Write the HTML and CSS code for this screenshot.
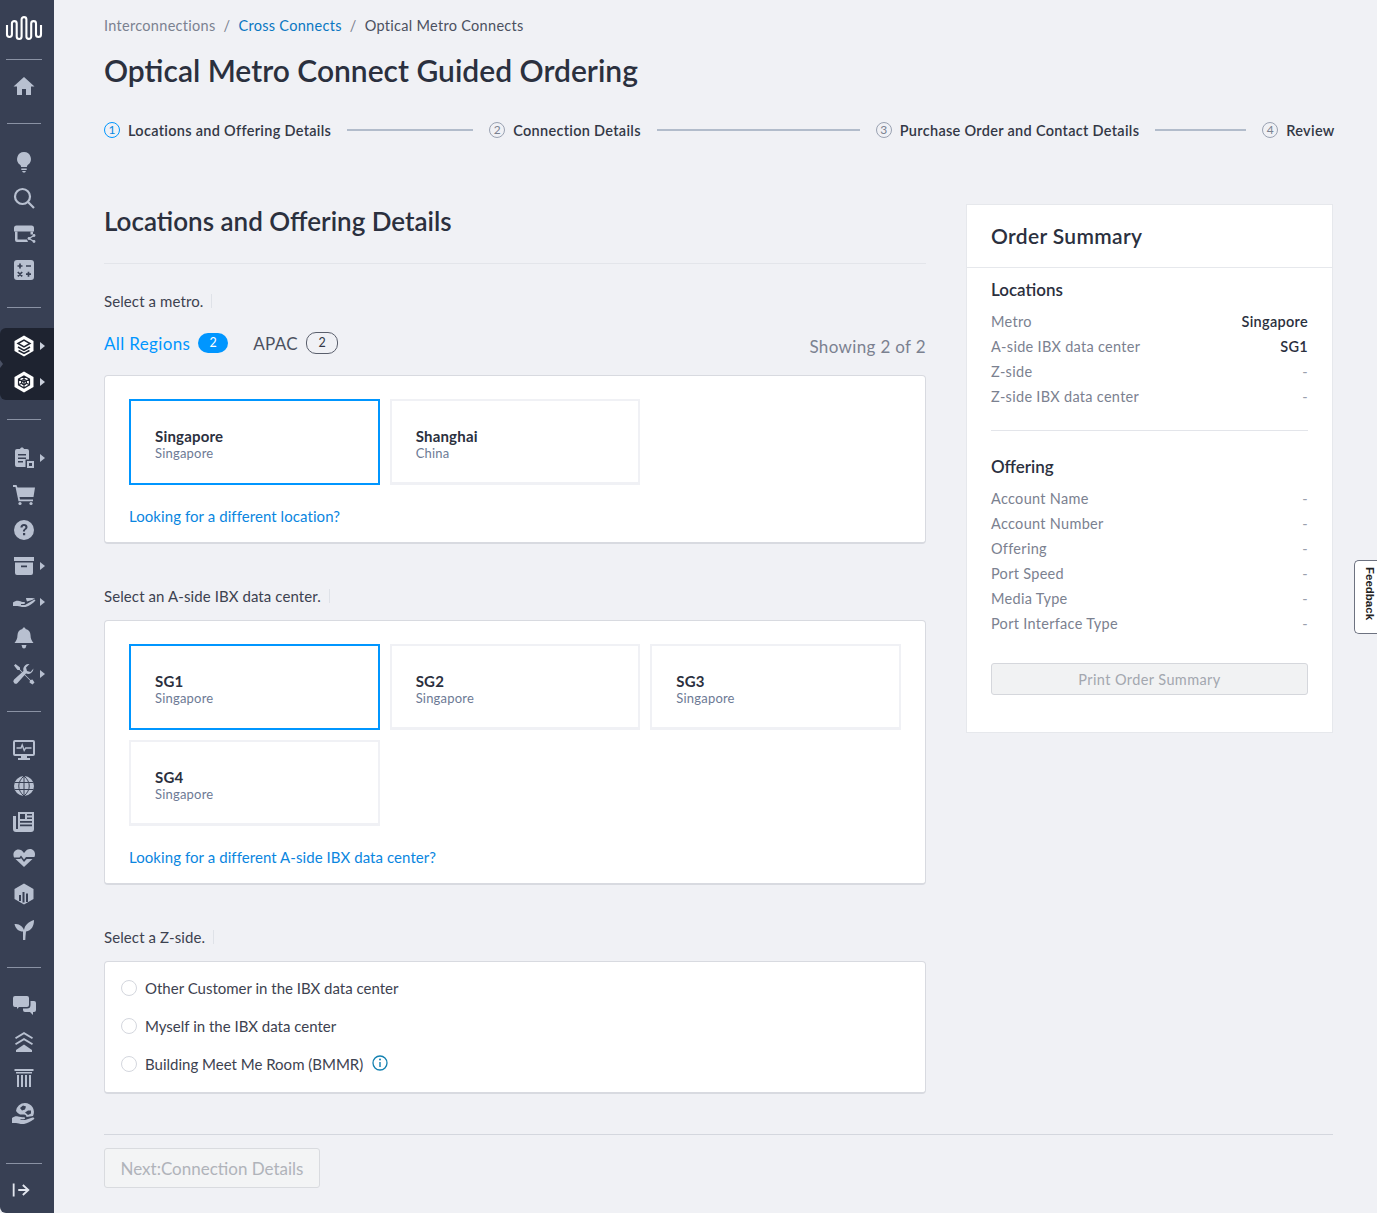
FILE: index.html
```html
<!DOCTYPE html>
<html lang="en">
<head>
<meta charset="utf-8">
<title>Optical Metro Connect Guided Ordering</title>
<link rel="stylesheet" href="styles.css">
</head>
<body>
<div class="app">
<nav class="side">
  <svg class="logo" viewBox="0 0 38 26"><path d="M2 9V18.500a2.450 2.450 0 0 0 4.900 0V7.500a2.400 2.400 0 0 1 4.800 0V20.500a2.450 2.450 0 0 0 4.900 0V3.500a2.400 2.400 0 0 1 4.800 0V20.500a2.400 2.400 0 0 0 4.800 0V7.500a2.400 2.400 0 0 1 4.800 0V18.500a2.500 2.500 0 0 0 5 0V9" fill="none" stroke="#fff" stroke-width="2.100"/></svg>
  <hr class="rule first">
  <div class="grp home">
    <a class="it"><svg viewBox="0 0 24 24"><path d="M12 3 1.500 12.500H5V21h5v-6h4v6h5v-8.500h3.500z"/></svg></a>
  </div>
  <hr class="rule">
  <div class="grp">
    <a class="it"><svg viewBox="0 0 24 24"><path d="M12 2a7 7 0 0 0-4 12.700c.8.700 1 1.500 1.100 2.300h5.800c.1-.8.300-1.600 1.100-2.300A7 7 0 0 0 12 2zM9.300 18.500h5.400v1.500H9.300zM10 21h4l-1 1.500h-2z"/></svg></a>
    <a class="it"><svg viewBox="0 0 24 24"><path d="M10.500 3a7.500 7.500 0 1 0 0 15 7.500 7.500 0 0 0 0-15zM16 16l6 6" fill="none" stroke="#b8c0d0" stroke-width="2.200"/></svg></a>
    <a class="it"><svg viewBox="0 0 24 24"><path d="M4.500 3.500h15a2.500 2.500 0 0 1 2.500 2.500v3.500H2V6a2.500 2.500 0 0 1 2.500-2.500z"/><path d="M3 9.500h2.500v8H15l1 2.500H5a2 2 0 0 1-2-2zM18.500 9.500H21v3h-2.500z"/><path d="M22 13.500l-5 3 5 3" fill="none" stroke="#b8c0d0" stroke-width="1.400"/><circle cx="22" cy="13.500" r="1.400"/><circle cx="17" cy="16.500" r="1.400"/><circle cx="22" cy="19.500" r="1.400"/></svg></a>
    <a class="it"><svg viewBox="0 0 24 24"><rect x="2" y="2" width="20" height="20" rx="3"/><path d="M5.500 8h5M8 5.500v5M14 8h5M5.800 14l4.400 4.400M10.200 14l-4.400 4.400M14 16.200h5M16.500 13.700v5" fill="none" stroke="#384054" stroke-width="1.700"/></svg></a>
  </div>
  <hr class="rule">
  <div class="grp">
    <div class="dark">
      <a class="it on"><svg viewBox="0 0 24 24"><path d="M12 1.500 21.500 7v10L12 22.500 2.500 17V7z"/><path d="M6 9.500 12 6l6 3.500-6 3.500zM6 13l6 3.500 6-3.500M6.500 16.500l5.500 3 5.500-3" fill="none" stroke="#1e2330" stroke-width="1.500"/></svg><i class="caret"></i></a>
      <a class="it on"><svg viewBox="0 0 24 24"><path d="M12 1.500 21.500 7v10L12 22.500 2.500 17V7z"/><path d="M12 6 17.500 9.200v5.600L12 18l-5.500-3.200V9.200zM12 6v12M6.500 9.200l11 5.600M17.500 9.200l-11 5.600" fill="none" stroke="#1e2330" stroke-width="1.200"/><circle cx="12" cy="12" r="2.500" fill="none" stroke="#1e2330" stroke-width="1.200"/></svg><i class="caret"></i></a>
    </div>
  </div>
  <hr class="rule">
  <div class="grp">
    <a class="it"><svg viewBox="0 0 24 24"><path fill-rule="evenodd" d="M10 1.500c1 0 1.800.7 2 1.500h3a2 2 0 0 1 2 2v8.500h-3.500V21H5a2 2 0 0 1-2-2V5a2 2 0 0 1 2-2h3c.2-.8 1-1.500 2-1.500zM6 8v1.500h8V8zm0 3.500V13h8v-1.500zM6 15v1.500h5V15z"/><path d="M15 15h7v7h-7zm2 2v3h3v-3z" fill-rule="evenodd"/></svg><i class="caret"></i></a>
    <a class="it"><svg viewBox="0 0 24 24"><path d="M1 3h3.500l1 2.500H23l-1.500 9.500H7.500l.5 2.500h13v1.800H6.500L3.500 5H1z"/><circle cx="8" cy="21.500" r="1.600"/><circle cx="19" cy="21.500" r="1.600"/></svg></a>
    <a class="it"><svg viewBox="0 0 24 24"><path fill-rule="evenodd" d="M12 2a10 10 0 1 1 0 20 10 10 0 0 1 0-20zm-3.600 7.500h2.100c.1-1 .7-1.500 1.500-1.500s1.400.5 1.400 1.200c0 1.500-2.500 1.700-2.500 4.300h2c0-1.800 2.600-2 2.600-4.400C15.500 7.200 14 6 12 6 9.800 6 8.500 7.300 8.400 9.500zM11 15v2.200h2.200V15z"/></svg></a>
    <a class="it"><svg viewBox="0 0 24 24"><path fill-rule="evenodd" d="M2 3h20v4H2zM3 8.500h18V19a2 2 0 0 1-2 2H5a2 2 0 0 1-2-2zm6 3v1.700h6v-1.700z"/></svg><i class="caret"></i></a>
    <a class="it"><svg viewBox="0 0 24 24"><path d="M1 12.500c2-1.500 4-2 6-1.500 2 .5 3 1 5 1 1.500 0 1.500 2-.5 2H9v1h4l9.500-5.500 1 1c-3 3-6 5.500-10 6.500-4 .500-6-1-8-1H1z"/><path d="M14 8h6l3 .5-3 1.500-5 1.500c-.5-1.500-1-2.500-1-3.500z"/></svg><i class="caret"></i></a>
    <a class="it"><svg viewBox="0 0 24 24"><path d="M12 1.500c.8 0 1.500.6 1.500 1.400 3 .6 5 3 5 6.100 0 4 1.500 6 3 8H2.500c1.500-2 3-4 3-8 0-3.100 2-5.500 5-6.100 0-.8.700-1.400 1.500-1.400zM9.500 19h5l-.5 1.500a2 2 0 0 1-4 0z"/></svg></a>
    <a class="it"><svg viewBox="0 0 24 24"><path d="M3.500 2 8 5.500v2L18.500 18l2-.5 2 3-2 2-3-2 .5-2L7.500 8h-2L2 3.500z"/><path d="M21.500 6.500a5.500 5.500 0 0 1-7.500 5.100L5.500 21a2.400 2.400 0 0 1-3.400-3.400l9.400-8.500A5.500 5.500 0 0 1 17.500 2L14 5.500l1 3.500 3.500 1z"/></svg><i class="caret"></i></a>
  </div>
  <hr class="rule">
  <div class="grp">
    <a class="it"><svg viewBox="0 0 24 24"><path fill-rule="evenodd" d="M3 2h18a2 2 0 0 1 2 2v12a2 2 0 0 1-2 2h-6v2h3v2H6v-2h3v-2H3a2 2 0 0 1-2-2V4a2 2 0 0 1 2-2zm0 2v12h18V4z"/><path d="M4.500 10H9l1.200-3 2 5.500 1.500-2.500h5.800" fill="none" stroke="#b8c0d0" stroke-width="1.400"/></svg></a>
    <a class="it"><svg viewBox="0 0 24 24"><circle cx="12" cy="12" r="10"/><path d="M2.500 8.500h19M2.500 15.500h19M12 2v20M12 2c-7 6-7 14 0 20M12 2c7 6 7 14 0 20" fill="none" stroke="#384054" stroke-width="1"/></svg></a>
    <a class="it"><svg viewBox="0 0 24 24"><path fill-rule="evenodd" d="M6 2h16v17a3 3 0 0 1-3 3H4a3 3 0 0 1-3-3V6h3v13h1.800c.2 0 .2-.1.200-.3zm2 2v5h5V4zm7 0v1.500h5V4zm0 3.500V9h5V7.500zM8 11v1.700h12V11zm0 3.500v1.700h12v-1.700z"/></svg></a>
    <a class="it"><svg viewBox="0 0 24 24"><path d="M12 7C10.500 4.500 8.500 3.500 6.500 3.500 3.500 3.500 1 6 1.500 9.500c0 .8.300 1.500.6 2h5.400l1.500-2 3 4 2-2.500h8.400c.3-.5.500-1.200.6-1.900.4-3.600-2-6.100-5-6.100-2 0-4 1-5.500 3.500z"/><path d="M3.500 13h4.700l.8-.9 3 4 2.700-3.100h5.800L12 21z"/></svg></a>
    <a class="it"><svg viewBox="0 0 24 24"><path fill-rule="evenodd" d="M12 1.500 21.500 7v10L12 22.500 2.500 17V7zM7 13v6h2v-6zm3.500-3v10.500h2V10zm3.500 1.500V20h2v-8.500z"/></svg></a>
    <a class="it"><svg viewBox="0 0 24 24"><path d="M11 22v-8.500C7 13.500 3.500 11 2.500 6c4 0 7.500 1 9.500 6 1-5 4-8 10-10 0 6-2.500 10.500-8 11.500-.4 3-.6 6-.7 8.500z"/></svg></a>
  </div>
  <hr class="rule">
  <div class="grp">
    <a class="it"><svg viewBox="0 0 24 24"><path d="M3 2h12a2 2 0 0 1 2 2v7a2 2 0 0 1-2 2H7l-2 2v-2H3a2 2 0 0 1-2-2V4a2 2 0 0 1 2-2z"/><path d="M18.500 7H22a2 2 0 0 1 2 2v7a2 2 0 0 1-2 2h-1v3l-3-3h-5a2 2 0 0 1-2-2v-1.500h4a3.500 3.500 0 0 0 3.500-3.500z"/></svg></a>
    <a class="it"><svg viewBox="0 0 24 24"><path d="M12 2 21 7.500l-1 1.500-8-4.800L4 9 3 7.500zM12 8l9 5.500-1 1.500-8-4.800L4 15l-1-1.500zM12 14.500l8 5.500v2H4v-2z"/></svg></a>
    <a class="it"><svg viewBox="0 0 24 24"><path d="M2.500 3h19v2h-19zM4 6h16v1.500H4zM5 9h2v12H5zM9 9h2v12H9zM13 9h2v12h-2zM17 9h2v12h-2z"/></svg></a>
    <a class="it"><svg viewBox="0 0 24 24"><path fill-rule="evenodd" d="M13 1a9 9 0 0 1 8 13l-6.500 1c0-1.500-1-2.500-2.500-2.500H8a9 9 0 0 1-4-3.500A9 9 0 0 1 13 1zm-2 2.500L8 6l2 2.500 3-1 1-3zm5 5-3 2 3 2.500 3-1.500v-3z"/><path d="M0 16c2-1.500 4-2 6-1.500s3.500.8 6 .8c1.500 0 1.500 2-.5 2h-3v.7h4.500l7.500-2.500c1.800-.5 2.500 1 1 2-3 2-6 4-9.500 4.500-4 .3-6-1-8-1H0z"/></svg></a>
  </div>
  <hr class="rule last">
  <a class="it exit"><svg viewBox="0 0 24 24"><path d="M4 5v14M9 12h11M14 6.500l6 5.500-6 5.500" fill="none" stroke="#e2e6ee" stroke-width="2"/></svg></a>
</nav>

<main class="main">
  <div class="crumbs"><span>Interconnections</span><b>/</b><a>Cross Connects</a><b>/</b><em>Optical Metro Connects</em></div>
  <h1 class="title">Optical Metro Connect Guided Ordering</h1>
  <ol class="steps">
    <li class="step cur"><span class="num">1</span>Locations and Offering Details</li>
    <li class="bar b1"></li>
    <li class="step"><span class="num">2</span>Connection Details</li>
    <li class="bar b2"></li>
    <li class="step"><span class="num">3</span>Purchase Order and Contact Details</li>
    <li class="bar b3"></li>
    <li class="step"><span class="num">4</span>Review</li>
  </ol>

  <div class="cols">
    <section class="left">
      <h2 class="head">Locations and Offering Details</h2>
      <div class="label l1">Select a metro.<s></s></div>
      <div class="tabs">
        <span class="tab act">All Regions</span><span class="pill fill">2</span>
        <span class="tab second">APAC</span><span class="pill line">2</span>
        <span class="showing">Showing 2 of 2</span>
      </div>
      <div class="panel p1">
        <div class="tiles">
          <div class="tile sel"><strong>Singapore</strong><small>Singapore</small></div>
          <div class="tile"><strong>Shanghai</strong><small>China</small></div>
        </div>
        <a class="more">Looking for a different location?</a>
      </div>
      <div class="label l2">Select an A-side IBX data center.<s></s></div>
      <div class="panel p1">
        <div class="tiles">
          <div class="tile sel"><strong>SG1</strong><small>Singapore</small></div>
          <div class="tile"><strong>SG2</strong><small>Singapore</small></div>
          <div class="tile"><strong>SG3</strong><small>Singapore</small></div>
          <div class="tile"><strong>SG4</strong><small>Singapore</small></div>
        </div>
        <a class="more">Looking for a different A-side IBX data center?</a>
      </div>
      <div class="label l2">Select a Z-side.<s></s></div>
      <div class="panel p2">
        <div class="radio"><i></i>Other Customer in the IBX data center</div>
        <div class="radio"><i></i>Myself in the IBX data center</div>
        <div class="radio"><i></i>Building Meet Me Room (BMMR)
          <svg class="info" viewBox="0 0 16 16"><circle cx="8" cy="8" r="7" fill="none" stroke="#1280b0" stroke-width="1.300"/><path d="M8 7v5" stroke="#1280b0" stroke-width="1.400"/><circle cx="8" cy="4.600" r="1" fill="#1280b0"/></svg>
        </div>
      </div>
    </section>

    <aside class="sum">
      <h3 class="sum-title">Order Summary</h3>
      <div class="sum-body">
        <h4>Locations</h4>
        <dl>
          <div><dt>Metro</dt><dd class="v">Singapore</dd></div>
          <div><dt>A-side IBX data center</dt><dd class="v">SG1</dd></div>
          <div><dt>Z-side</dt><dd>-</dd></div>
          <div><dt>Z-side IBX data center</dt><dd>-</dd></div>
        </dl>
        <hr class="sep">
        <h4>Offering</h4>
        <dl>
          <div><dt>Account Name</dt><dd>-</dd></div>
          <div><dt>Account Number</dt><dd>-</dd></div>
          <div><dt>Offering</dt><dd>-</dd></div>
          <div><dt>Port Speed</dt><dd>-</dd></div>
          <div><dt>Media Type</dt><dd>-</dd></div>
          <div><dt>Port Interface Type</dt><dd>-</dd></div>
        </dl>
        <button class="print" disabled>Print Order Summary</button>
      </div>
    </aside>
  </div>

  <div class="foot"><button class="next" disabled>Next:Connection Details</button></div>
</main>
<div class="feedback"><span>Feedback</span></div>
</div>
</body>
</html>
```
FILE: styles.css
```css
* { box-sizing: border-box; }
html, body { margin: 0; height: 100%; }
body { background: #f0f1f5; font-family: "Lato", sans-serif; color: #333846; overflow: hidden; }
.app { display: flex; height: 1213px; position: relative; }

.side { width: 54px; flex: none; background: #384054; display: flex; flex-direction: column; align-items: stretch; border-bottom-left-radius: 6px; }
.logo { width: 38px; height: 26px; margin: 16px 0 0 5px; display: block; flex: none; }
.rule { width: 34px; height: 1px; border: 0; background: #8a92a4; margin: 0 0 0 7px; flex: none; }
.rule.first { width: 36px; margin: 17px 0 0 6px; }
.grp { padding: 20px 0 19px; }
.grp.home { padding: 8px 0 19px; }
.it { display: flex; height: 36px; align-items: center; position: relative; padding-left: 12px; }
.it svg { width: 24px; height: 24px; fill: #b8c0d0; display: block; }
.it.on svg { fill: #fff; }
.caret { position: absolute; left: 40px; top: 14px; border-left: 5px solid #b8c0d0; border-top: 4px solid transparent; border-bottom: 4px solid transparent; }
.on .caret { border-left-color: #c9cfdb; }
.dark { background: #1e2330; border-radius: 6px 0 0 6px; position: relative; }
.dark::before { content: ""; position: absolute; left: 0; top: 32px; border-left: 3px solid #4a5164; border-top: 4px solid transparent; border-bottom: 4px solid transparent; }
.rule.last { width: 36px; margin: 12px 0 0 6px; }
.exit { height: 24px; margin-top: 14px; padding-left: 10px; }
.exit svg { width: 22px; height: 22px; }

.main { flex: 1; min-width: 0; padding: 16px 44px 0 50px; }
.crumbs { display: flex; gap: 8px; font-size: 14.500px; line-height: 20px; letter-spacing: .3px; color: #7b8190; }
.crumbs a { color: #0a77c2; }
.crumbs b { font-weight: 400; }
.crumbs em { font-style: normal; color: #4b5060; }
.title { margin: 13px 0 0; font-size: 30px; line-height: 42px; font-weight: 600; color: #2b303e; }
.steps { list-style: none; display: flex; align-items: center; margin: 27px 0 0; padding: 0; height: 24px; font-size: 14.500px; letter-spacing: .3px; font-weight: 600; color: #333846; }
.step { display: flex; align-items: center; gap: 8px; white-space: nowrap; }
.num { width: 16px; height: 16px; border: 1px solid #9aa2b2; border-radius: 50%; font-size: 12px; font-weight: 400; line-height: 14px; letter-spacing: 0; text-align: center; color: #7b8190; }
.cur .num { border-color: #0096ff; color: #0a86df; }
.bar { height: 2px; background: #b2bccb; flex: none; margin: 0 16px; }
.b1 { width: 126px; }
.b2 { width: 203px; }
.b3 { width: 91px; }

.cols { display: flex; justify-content: space-between; margin-top: 62px; }
.left { width: 822px; }
.head { margin: 0; padding: 0 0 25px; font-size: 26px; line-height: 34px; font-weight: 600; color: #2b303e; border-bottom: 1px solid #e3e5ea; }
.label { font-size: 15px; line-height: 20px; letter-spacing: .1px; color: #3d4250; display: flex; align-items: center; }
.label s { width: 1px; height: 14px; background: #dfe2e8; margin-left: 8px; }
.l1 { margin-top: 27px; }
.l2 { margin-top: 42px; margin-bottom: 14px; }
.tabs { display: flex; align-items: center; height: 32px; margin-top: 16px; margin-bottom: 16px; font-size: 17px; letter-spacing: .35px; }
.tab { color: #4b5060; }
.tab.act { color: #0096ff; }
.second { margin-left: 25px; }
.pill { display: inline-block; margin-left: 8px; font-size: 12.500px; line-height: 18px; letter-spacing: 0; text-align: center; border-radius: 10px; }
.fill { width: 30px; height: 20px; line-height: 20px; background: #0096ff; color: #fff; }
.line { width: 32px; height: 22px; line-height: 20px; border: 1px solid #5a5f6c; color: #333846; }
.showing { margin-left: auto; color: #7b8190; font-size: 17px; padding-top: 7px; }
.panel { background: #fff; border: 1px solid #d8dae0; border-bottom-width: 2px; border-radius: 4px; }
.p1 { padding: 23px 24px 16px; }
.tiles { display: grid; grid-template-columns: repeat(3, 250.670px); gap: 10px; }
.tile { height: 86px; border: 2px solid #f0f1f5; border-bottom-width: 3px; padding: 26px 0 0 24px; background: #fff; }
.tile.sel { border: 2px solid #0096ff; }
.tile strong { display: block; font-size: 15px; line-height: 19px; letter-spacing: .2px; font-weight: 700; color: #2b303e; }
.tile small { display: block; font-size: 13px; line-height: 15px; letter-spacing: .2px; color: #6d7a95; }
.more { display: block; margin-top: 21px; font-size: 15px; line-height: 20px; letter-spacing: .07px; color: #0a86df; }
.p2 { padding: 7px 16px 9px; }
.radio { display: flex; align-items: center; height: 38px; font-size: 15px; color: #3d4250; }
.radio i { width: 16px; height: 16px; border: 1px solid #d4d7de; border-radius: 50%; margin-right: 8px; background: #fff; }
.info { width: 16px; height: 16px; margin-left: 9px; margin-top: -2px; }

.sum { width: 367px; height: 529px; background: #fff; border: 1px solid #e6e8ec; }
.sum-title { margin: 0; padding: 0 24px; height: 63px; line-height: 62px; font-size: 21px; letter-spacing: .35px; font-weight: 600; color: #2b303e; border-bottom: 1px solid #e6e8ec; }
.sum-body { padding: 11px 24px 0; }
.sum h4 { margin: 0; font-size: 17px; line-height: 22px; font-weight: 600; color: #2b303e; }
.sum dl { margin: 8px 0 0; }
.sum dl div { display: flex; justify-content: space-between; height: 25px; line-height: 25px; font-size: 14.500px; letter-spacing: .3px; color: #7b8190; }
.sum dd { margin: 0; color: #9aa0ad; }
.sum dd.v { color: #2b303e; font-weight: 600; }
.sep { height: 1px; border: 0; background: #e3e5ea; margin: 21px 0 25px; }
.print { display: block; width: 100%; height: 32px; margin-top: 27px; border: 1px solid #d5d7dc; border-radius: 3px; background: #f1f2f3; color: #a3a7af; font: 14.500px "Lato", sans-serif; letter-spacing: .4px; }

.foot { border-top: 1px solid #d4d7de; margin-top: 40px; padding-top: 13px; }
.next { display: block; width: 216px; height: 40px; border: 1px solid #d9dbdf; border-radius: 3px; background: #f3f4f5; color: #b0b3ba; font: 17px "Lato", sans-serif; }

.feedback { position: absolute; right: 0; top: 560px; width: 23px; height: 74px; background: #fff; border: 1px solid #6d7280; border-right: 0; border-radius: 5px 0 0 5px; padding: 6px 0 0 8px; }
.feedback span { display: block; writing-mode: vertical-rl; font: 700 11.500px/14px "Liberation Sans", sans-serif; color: #222; }
```
